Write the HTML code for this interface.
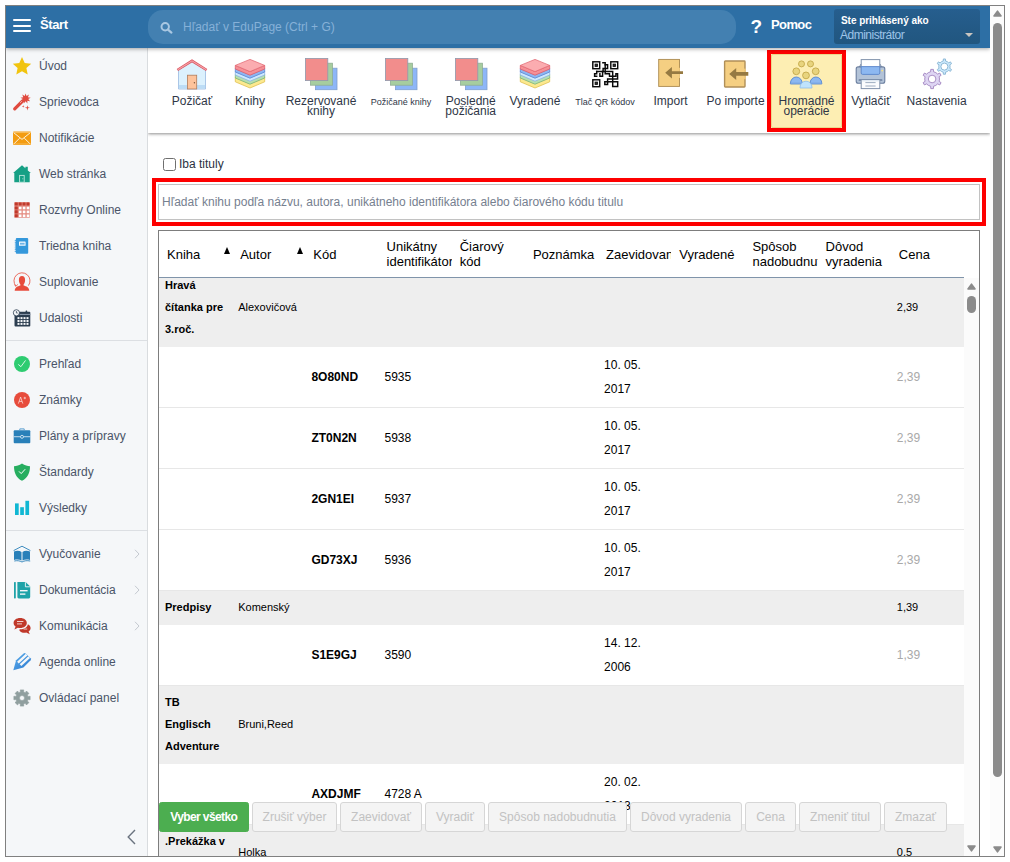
<!DOCTYPE html>
<html lang="sk">
<head>
<meta charset="utf-8">
<title>EduPage</title>
<style>
*{box-sizing:border-box;}
html,body{margin:0;padding:0;}
body{width:1010px;height:862px;overflow:hidden;background:#fff;font-family:"Liberation Sans",sans-serif;font-size:12px;color:#000;position:relative;}
#frame{position:absolute;left:5px;top:5px;width:1000px;height:852px;border:1px solid #808080;overflow:hidden;background:#fff;}
/* coordinates inside frame = page coords - 6 */
#hdr{position:absolute;left:0;top:0;width:984px;height:42px;background:#2d6fa5;box-shadow:0 1px 4px rgba(0,0,0,.35);z-index:5;}
#side{position:absolute;left:0;top:42px;width:142px;height:808px;background:#f5f7f9;border-right:1px solid #d9dcdf;}
#vscroll{position:absolute;left:984px;top:0;width:14px;height:850px;background:#fcfcfc;z-index:9;}
#vscroll .thumb{position:absolute;left:3px;top:17px;width:9px;height:754px;border-radius:5px;background:#8b8b8b;}
.arr-up,.arr-dn{position:absolute;width:9px;height:7px;}
.arr-dn{transform:rotate(180deg);}

#hdr .burger{position:absolute;left:7px;top:13px;width:18px;height:14px;}
#hdr .burger i{position:absolute;left:0;width:18px;height:2px;background:#fff;border-radius:1px;}
#hdr .start{position:absolute;left:34px;top:11px;font-weight:bold;font-size:13px;color:#fff;letter-spacing:-0.4px;line-height:16px;}
#hdr .search{position:absolute;left:142px;top:4px;width:588px;height:34px;border-radius:15px;background:#4380b1;}
#hdr .search svg{position:absolute;left:11.5px;top:11.5px;}
#hdr .search span{position:absolute;left:35px;top:9px;font-size:12px;line-height:16px;color:#86b1d8;letter-spacing:0;}
#hdr .q{position:absolute;left:744.5px;top:9.5px;font-weight:bold;font-size:19px;line-height:22px;color:#fff;}
#hdr .pomoc{position:absolute;left:765px;top:11px;font-weight:bold;font-size:13px;color:#fff;letter-spacing:-0.6px;line-height:16px;}
#hdr .user{position:absolute;left:828px;top:3px;width:146px;height:35px;border-radius:3px;background:linear-gradient(#265e8e,#21567f);}
#hdr .user b{position:absolute;left:7px;top:5.5px;font-size:10px;line-height:12px;color:#fff;letter-spacing:-0.05px;white-space:nowrap;}
#hdr .user span{position:absolute;left:6px;top:19px;font-size:12px;line-height:14px;color:#9ec4e8;letter-spacing:-0.5px;}
#hdr .user i{position:absolute;left:131px;top:24px;width:0;height:0;border-left:4px solid transparent;border-right:4px solid transparent;border-top:4px solid #c9c5c0;}

#side .it{position:absolute;left:0;width:141px;height:36px;}
#side .it svg{position:absolute;left:7px;top:9px;width:18px;height:18px;overflow:visible;}
#side .it span{position:absolute;left:33px;top:10px;font-size:12px;line-height:16px;color:#4a5468;white-space:nowrap;}
#side .it em{position:absolute;left:128px;top:13px;width:6px;height:10px;}
#side .sep{position:absolute;left:0;width:141px;height:1px;background:#dcdfe3;}
#side .coll{position:absolute;left:121px;top:781px;}

#main{position:absolute;left:142px;top:42px;width:842px;height:808px;background:#fff;overflow:hidden;}
/* main coords = page - (148,48) */
#tb{position:absolute;left:0;top:0;width:842px;height:85px;background:#fff;box-shadow:0 1px 3px rgba(0,0,0,.45);z-index:2;}
#tb .ti{position:absolute;top:0;height:85px;width:0;}
#tb .ti svg{position:absolute;overflow:visible;}
#tb .ti .lb{position:absolute;left:-60px;width:120px;text-align:center;top:48px;font-size:12px;line-height:10px;color:#2f3747;white-space:nowrap;}
#tb .ti .lb.sm{font-size:9px;top:49px;}
#tb .hl{position:absolute;left:619px;top:2px;width:79px;height:82px;border:4px solid #fe0000;background:#fdeeb3;}
#tb .hl i{position:absolute;left:0;top:0;width:71px;height:74px;border:1px solid #ecd88c;border-radius:2px;}

/* content; main coords = page - (148,48) */
#cb{position:absolute;left:15px;top:110px;width:13px;height:13px;border:1px solid #6f6f6f;border-radius:2.5px;background:#fff;}
#cbl{position:absolute;left:31px;top:108px;font-size:12px;line-height:16px;color:#2b3242;}
#red{position:absolute;left:4px;top:130px;width:834px;height:48px;border:4px solid #fe0000;}
#inp{position:absolute;left:10px;top:136px;width:822px;height:36px;border:1px solid #c2c2c2;background:#fff;}
#inp span{position:absolute;left:3px;top:9px;font-size:12px;line-height:16px;color:#76808f;white-space:nowrap;}
#tw{position:absolute;left:10px;top:182px;width:822px;height:700px;border:1px solid #7d7d7d;background:#fff;overflow:hidden;}
/* tw inner coords = page - (159,231) */
#th{position:absolute;left:0;top:0;width:805px;height:47px;border-bottom:1px solid #8094aa;background:#fff;z-index:3;}
#th div{position:absolute;top:0;height:46px;width:73.18px;padding-left:8px;font-size:13px;line-height:15px;display:flex;align-items:center;overflow:hidden;white-space:nowrap;color:#000;}
#th i{position:absolute;top:16px;width:0;height:0;border-left:3.8px solid transparent;border-right:3.8px solid transparent;border-bottom:7px solid #000;margin-left:-0.3px;}
#tbod{position:absolute;left:0;top:47px;width:805px;height:660px;}
.gr{position:absolute;left:0;width:805px;background:#eeeeee;font-size:11px;line-height:22px;}
.ir{position:absolute;left:0;width:805px;height:61px;border-bottom:1px solid #e7e7e7;font-size:12px;line-height:24px;background:#fff;}
.gr div,.ir div{position:absolute;top:0;bottom:0;display:flex;align-items:center;white-space:nowrap;}
.gr div{top:-1px;bottom:1px;}
.gr .c0{left:6px;font-weight:bold;}
.c1{left:79.2px;}.c2{left:152.4px;font-weight:bold;}.c3{left:225.5px;}.c6{left:445.1px;}.c10{left:737.8px;}
.ir .c10{color:#a9a9a9;}
#isb{position:absolute;left:805px;top:47px;width:15px;height:660px;background:#fbfbfb;}
#isb .thumb{position:absolute;left:3px;top:18px;width:9px;height:17px;border-radius:4.5px;background:#8b8b8b;}
#btns{position:absolute;left:11px;top:754px;height:30px;white-space:nowrap;z-index:6;}
#btns span{position:absolute;top:0;height:30px;border:1px solid #d6d6d6;border-radius:3px;background:#f4f4f4;color:#c2c2c2;font-size:12px;line-height:28px;text-align:center;}
#btns span.g{background:#4cae50;border-color:#4cae50;color:#fff;font-weight:bold;letter-spacing:-0.6px;}
</style>
</head>
<body>
<div id="frame">
  <div id="hdr">
    <div class="burger"><i style="top:0"></i><i style="top:5.5px"></i><i style="top:11px"></i></div>
    <div class="start">Štart</div>
    <div class="search"><svg width="13" height="12" viewBox="0 0 13 12"><circle cx="5.2" cy="4.8" r="3.7" fill="none" stroke="#a9c7e2" stroke-width="2"/><path d="M8 7.6 L11.4 10.6" stroke="#a9c7e2" stroke-width="2.2" stroke-linecap="round"/></svg><span>Hľadať v EduPage (Ctrl + G)</span></div>
    <div class="q">?</div>
    <div class="pomoc">Pomoc</div>
    <div class="user"><b>Ste prihlásený ako</b><span>Administrátor</span><i></i></div>
  </div>
  <div id="side">
    <div class="it" style="top:0px"><svg viewBox="0 0 18 18"><path d="M9 0 L11.7 6 L18.2 6.7 L13.4 11.1 L14.7 17.5 L9 14.3 L3.3 17.5 L4.6 11.1 L-0.2 6.7 L6.3 6 Z" fill="#f1c40f"/></svg><span>Úvod</span></div>
    <div class="it" style="top:36px"><svg viewBox="0 0 18 18"><path d="M1.7 15.9 L9.6 8" stroke="#e04a3f" stroke-width="3.2" stroke-linecap="round"/><path d="M7.4 9.6 L9.8 7.2" stroke="#f5c8c3" stroke-width="0.8" stroke-linecap="round"/><path d="M12.60 0.40 L13.52 3.06 L15.94 1.62 L14.94 4.25 L17.72 4.70 L15.26 6.07 L17.10 8.20 L14.34 7.67 L14.38 10.49 L12.60 8.30 L10.82 10.49 L10.86 7.67 L8.10 8.20 L9.94 6.07 L7.48 4.70 L10.26 4.25 L9.26 1.62 L11.68 3.06 Z" fill="#e04a3f"/><path d="M14.40 12.20 L14.97 14.23 L17.00 14.80 L14.97 15.37 L14.40 17.40 L13.83 15.37 L11.80 14.80 L13.83 14.23 Z" fill="#e04a3f"/><path d="M10.20 12.10 L10.48 13.12 L11.50 13.40 L10.48 13.68 L10.20 14.70 L9.92 13.68 L8.90 13.40 L9.92 13.12 Z" fill="#e04a3f"/></svg><span>Sprievodca</span></div>
    <div class="it" style="top:72px"><svg viewBox="0 0 18 18"><rect x="0" y="2.5" width="18" height="13.5" rx="0.8" fill="#f39c12"/><path d="M0.6 3.6 L9 10.4 L17.4 3.6" fill="none" stroke="#fdf3df" stroke-width="1"/><path d="M0.6 15.2 L6.6 9.2 M17.4 15.2 L11.4 9.2" fill="none" stroke="#fdf3df" stroke-width="1"/><path d="M0.3 3.5 L17.7 3.5 M0.3 15 L17.7 15" stroke="#f9c877" stroke-width="0.7"/></svg><span>Notifikácie</span></div>
    <div class="it" style="top:108px"><svg viewBox="0 0 18 18"><path d="M9 0.2 L12.4 3.2 L12.4 1.8 L14.8 1.8 L14.8 5.4 L17.9 8.1 L16.7 8.1 L16.7 17.2 L1.3 17.2 L1.3 8.1 L0.1 8.1 Z" fill="#16a085"/><rect x="6.6" y="10.4" width="4.6" height="6.8" fill="none" stroke="#bfe6dd" stroke-width="0.9"/><circle cx="9.8" cy="13.8" r="0.5" fill="#bfe6dd"/></svg><span>Web stránka</span></div>
    <div class="it" style="top:144px"><svg viewBox="0 0 18 18"><rect x="1.3" y="1.1" width="15.5" height="15.7" rx="0.6" fill="#e48c82"/><rect x="1.70" y="1.50" width="3.1" height="3.1" rx="0.5" fill="#c0392b"/><rect x="5.60" y="1.50" width="3.1" height="3.1" rx="0.5" fill="#c0392b"/><rect x="9.50" y="1.50" width="3.1" height="3.1" rx="0.5" fill="#c0392b"/><rect x="13.40" y="1.50" width="3.1" height="3.1" rx="0.5" fill="#c0392b"/><rect x="1.70" y="5.40" width="3.1" height="3.1" rx="0.5" fill="#c0392b"/><rect x="5.90" y="5.70" width="2.6" height="2.6" fill="#fff"/><rect x="9.80" y="5.70" width="2.6" height="2.6" fill="#fff"/><rect x="13.70" y="5.70" width="2.6" height="2.6" fill="#fff"/><rect x="1.70" y="9.30" width="3.1" height="3.1" rx="0.5" fill="#c0392b"/><rect x="5.90" y="9.60" width="2.6" height="2.6" fill="#fff"/><rect x="9.80" y="9.60" width="2.6" height="2.6" fill="#fff"/><rect x="13.70" y="9.60" width="2.6" height="2.6" fill="#fff"/><rect x="1.70" y="13.20" width="3.1" height="3.1" rx="0.5" fill="#c0392b"/><rect x="5.90" y="13.50" width="2.6" height="2.6" fill="#fff"/><rect x="9.80" y="13.50" width="2.6" height="2.6" fill="#fff"/><rect x="13.70" y="13.50" width="2.6" height="2.6" fill="#fff"/></svg><span>Rozvrhy Online</span></div>
    <div class="it" style="top:180px"><svg viewBox="0 0 18 18"><rect x="2.8" y="0.9" width="12.4" height="15.8" rx="1" fill="#3498db"/><rect x="6" y="4.6" width="6.6" height="4.2" rx="0.4" fill="#f2f8fd"/><rect x="7" y="5.8" width="4.6" height="1.8" fill="#6db3e6"/><g fill="#3498db"><rect x="1.7" y="3.2" width="1.6" height="1.1" rx="0.4"/><rect x="1.7" y="5.3" width="1.6" height="1.1" rx="0.4"/><rect x="1.7" y="7.4" width="1.6" height="1.1" rx="0.4"/><rect x="1.7" y="9.5" width="1.6" height="1.1" rx="0.4"/><rect x="1.7" y="11.6" width="1.6" height="1.1" rx="0.4"/><rect x="1.7" y="13.7" width="1.6" height="1.1" rx="0.4"/></g></svg><span>Triedna kniha</span></div>
    <div class="it" style="top:216px"><svg viewBox="0 0 18 18"><path d="M2.9 13 A8 8 0 1 1 15.4 12.6" fill="none" stroke="#e74c3c" stroke-width="0.8"/><path d="M1.2 11.6 L3 13.4 L4.6 11.4" fill="none" stroke="#e74c3c" stroke-width="0.8"/><path d="M9 3 C11 3 12.1 4.6 12.1 7 C12.1 9 11.3 10.6 10.6 11.4 L10.6 12.6 C13.4 13.4 16 14.2 16.3 17.8 L1.7 17.8 C2 14.2 4.6 13.4 7.4 12.6 L7.4 11.4 C6.7 10.6 5.9 9 5.9 7 C5.9 4.6 7 3 9 3 Z" fill="#e74c3c"/></svg><span>Suplovanie</span></div>
    <div class="it" style="top:252px"><svg viewBox="0 0 18 18"><rect x="1.5" y="2.8" width="15.8" height="14.6" rx="1" fill="#2c3e50"/><rect x="12.6" y="1.4" width="1.6" height="2.6" rx="0.5" fill="#2c3e50"/><rect x="6.4" y="4.9" width="10.9" height="1.1" fill="#8796a8"/><rect x="4.5" y="8.1" width="2" height="2" fill="#f5f7f9"/><rect x="7.5" y="8.1" width="2" height="2" fill="#f5f7f9"/><rect x="10.5" y="8.1" width="2" height="2" fill="#f5f7f9"/><rect x="13.5" y="8.1" width="2" height="2" fill="#f5f7f9"/><rect x="4.5" y="11.0" width="2" height="2" fill="#f5f7f9"/><rect x="7.5" y="11.0" width="2" height="2" fill="#f5f7f9"/><rect x="10.5" y="11.0" width="2" height="2" fill="#f5f7f9"/><rect x="13.5" y="11.0" width="2" height="2" fill="#f5f7f9"/><rect x="4.5" y="13.9" width="2" height="2" fill="#f5f7f9"/><rect x="7.5" y="13.9" width="2" height="2" fill="#f5f7f9"/><rect x="10.5" y="13.9" width="2" height="2" fill="#f5f7f9"/><rect x="13.5" y="13.9" width="2" height="2" fill="#f5f7f9"/><circle cx="3.4" cy="3.8" r="3.1" fill="#f5f7f9" stroke="#2c3e50" stroke-width="0.8"/><path d="M3.4 2 L3.4 4 L4.8 4" fill="none" stroke="#2c3e50" stroke-width="0.7"/></svg><span>Udalosti</span></div>
    <div class="it" style="top:298px"><svg viewBox="0 0 18 18"><circle cx="9" cy="9" r="8" fill="#2ecc71"/><path d="M5.3 9.4 L7.9 11.7 L12.5 5.4" fill="none" stroke="#e9faf0" stroke-width="0.9"/></svg><span>Prehľad</span></div>
    <div class="it" style="top:334px"><svg viewBox="0 0 18 18"><circle cx="9" cy="9" r="8" fill="#e74c3c"/><path d="M5.4 12.6 L7.6 6 L9.8 12.6 M6.2 10.4 L9 10.4" fill="none" stroke="#fbe3e0" stroke-width="0.75"/><path d="M10.6 7 L13 7 M11.8 5.8 L11.8 8.2" stroke="#fbe3e0" stroke-width="0.7"/></svg><span>Známky</span></div>
    <div class="it" style="top:370px"><svg viewBox="0 0 18 18"><rect x="0.7" y="3.2" width="16.6" height="13" rx="1" fill="#2980b9"/><path d="M6.8 3.2 L6.8 1.9 L11.2 1.9 L11.2 3.2" fill="none" stroke="#5a9fd0" stroke-width="1"/><rect x="0.7" y="9.3" width="16.6" height="0.9" fill="#d4e6f3"/><circle cx="9" cy="9.8" r="1.5" fill="#2980b9" stroke="#d4e6f3" stroke-width="0.9"/></svg><span>Plány a prípravy</span></div>
    <div class="it" style="top:406px"><svg viewBox="0 0 18 18"><path d="M9 0.6 C11.8 2.6 14.6 3.2 17 3.2 C17 10 14.6 14.8 9 17.8 C3.4 14.8 1 10 1 3.2 C3.4 3.2 6.2 2.6 9 0.6 Z" fill="#27ae60"/><path d="M6 8.4 L8.2 10.6 L12.2 6.2" fill="none" stroke="#fff" stroke-width="1"/></svg><span>Štandardy</span></div>
    <div class="it" style="top:442px"><svg viewBox="0 0 18 18"><rect x="2" y="4.4" width="3.7" height="11.6" fill="#10b7d3"/><rect x="7.2" y="8.2" width="3.7" height="7.8" fill="#10b7d3"/><rect x="12.4" y="1.8" width="3.7" height="14.2" fill="#10b7d3"/></svg><span>Výsledky</span></div>
    <div class="it" style="top:488px"><svg viewBox="0 0 18 18"><path d="M0.6 5.6 L9 1.2 L17.4 5.6" fill="none" stroke="#2980b9" stroke-width="0.9"/><path d="M1 6.4 C4 5.4 6.6 5.6 8.5 7 L8.5 15.6 C6.6 14.4 4 14.2 1 15 Z" fill="#2980b9"/><path d="M17 6.4 C14 5.4 11.4 5.6 9.5 7 L9.5 15.6 C11.4 14.4 14 14.2 17 15 Z" fill="#2980b9"/><path d="M1.3 16 C4 15.4 6.6 15.6 9 17 C11.4 15.6 14 15.4 17.2 16" fill="none" stroke="#2980b9" stroke-width="0.9"/></svg><span>Vyučovanie</span><em><svg viewBox="0 0 6 10" style="position:absolute;left:0;top:0;width:6px;height:10px"><path d="M1 0.8 L5 5 L1 9.2" fill="none" stroke="#c5cad1" stroke-width="1"/></svg></em></div>
    <div class="it" style="top:524px"><svg viewBox="0 0 18 18"><rect x="1" y="1" width="1.8" height="16.4" rx="0.6" fill="#1fa3a8"/><path d="M4.4 1 L12.6 1 L17.2 5.6 L17.2 16 Q17.2 17.4 15.8 17.4 L5.8 17.4 Q4.4 17.4 4.4 16 Z" fill="#1fa3a8"/><path d="M12.4 1.2 L12.4 5.8 L17 5.8" fill="none" stroke="#f5f7f9" stroke-width="0.9"/><rect x="7" y="9" width="7.6" height="1.4" fill="#f5f7f9"/><rect x="7" y="12.4" width="5.4" height="1.4" fill="#f5f7f9"/></svg><span>Dokumentácia</span><em><svg viewBox="0 0 6 10" style="position:absolute;left:0;top:0;width:6px;height:10px"><path d="M1 0.8 L5 5 L1 9.2" fill="none" stroke="#c5cad1" stroke-width="1"/></svg></em></div>
    <div class="it" style="top:560px"><svg viewBox="0 0 18 18"><path d="M7.2 1 C11.2 1 13.8 3.2 13.8 6 C13.8 8.8 11.2 11 7.2 11 C6.4 11 5.6 10.9 4.9 10.7 L1.4 12.4 L2.6 9.6 C1.2 8.7 0.6 7.4 0.6 6 C0.6 3.2 3.2 1 7.2 1 Z" fill="#c0392b"/><path d="M14.9 7.2 C16.6 8 17.6 9.4 17.6 11 C17.6 12.4 16.9 13.6 15.6 14.4 L16.8 17.2 L13.2 15.5 C12.6 15.6 12 15.7 11.4 15.7 C9.2 15.7 7.4 14.8 6.4 13.4 L6.6 12.2 C10.8 12.4 14.4 10.4 14.9 7.2 Z" fill="#c0392b"/><rect x="4" y="4" width="6.4" height="1" fill="#f1d1cd"/><rect x="4" y="6.4" width="5" height="1" fill="#f1d1cd"/><rect x="10.6" y="11.6" width="3.6" height="0.9" fill="#f1d1cd"/></svg><span>Komunikácia</span><em><svg viewBox="0 0 6 10" style="position:absolute;left:0;top:0;width:6px;height:10px"><path d="M1 0.8 L5 5 L1 9.2" fill="none" stroke="#c5cad1" stroke-width="1"/></svg></em></div>
    <div class="it" style="top:596px"><svg viewBox="0 0 18 18"><defs><linearGradient id="pg" x1="0" y1="0" x2="1" y2="1"><stop offset="0" stop-color="#5fb0ec"/><stop offset="1" stop-color="#2877cf"/></linearGradient></defs><path d="M0.3 17.2 L3.1 7.2 L10.6 0.5 Q11.6 -0.3 12.6 0.6 L17.6 5.2 Q18.5 6.2 17.6 7.2 L10.4 14.5 Z" fill="url(#pg)"/><path d="M4.9 9.6 L13.6 1.6 M7.5 12.2 L16.2 4.2" stroke="#f5f7f9" stroke-width="2.4"/></svg><span>Agenda online</span></div>
    <div class="it" style="top:632px"><svg viewBox="0 0 18 18"><path fill-rule="evenodd" d="M7.25 0.89 L10.75 0.89 L10.59 3.01 L12.11 3.64 L13.50 2.03 L15.97 4.50 L14.36 5.89 L14.99 7.41 L17.11 7.25 L17.11 10.75 L14.99 10.59 L14.36 12.11 L15.97 13.50 L13.50 15.97 L12.11 14.36 L10.59 14.99 L10.75 17.11 L7.25 17.11 L7.41 14.99 L5.89 14.36 L4.50 15.97 L2.03 13.50 L3.64 12.11 L3.01 10.59 L0.89 10.75 L0.89 7.25 L3.01 7.41 L3.64 5.89 L2.03 4.50 L4.50 2.03 L5.89 3.64 L7.41 3.01 Z M9 6.5 A2.5 2.5 0 1 0 9 11.5 A2.5 2.5 0 1 0 9 6.5 Z" fill="#909f9f" stroke="#909f9f" stroke-width="0.6" stroke-linejoin="round"/></svg><span>Ovládací panel</span></div>
    <div class="sep" style="top:292px"></div><div class="sep" style="top:482px"></div>
    <svg class="coll" width="9" height="16" viewBox="0 0 9 16"><path d="M8 1 L1.2 8 L8 15" fill="none" stroke="#6b7480" stroke-width="1.4"/></svg>
  </div>
  <div id="main">
  <div id="tb">
    <div class="hl"><i></i></div>
    <div class="ti" style="left:44.0px"><svg style="left:-16px;top:10px" width="32" height="32" viewBox="0 0 32 32"><path d="M2.5 12 L16 3.5 L29.5 12 L29.5 31 L2.5 31 Z" fill="#dcf1fd" stroke="#a3bfe4" stroke-width="0.9"/><rect x="2.9" y="27" width="26.2" height="3.6" fill="#bcdcf5"/><path d="M1.4 12 L16 2.8 L30.6 12" fill="none" stroke="#dc5863" stroke-width="2.6" stroke-linejoin="miter"/><path d="M1.8 11.7 L16 2.8 L30.2 11.7" fill="none" stroke="#f6a3a8" stroke-width="1.1"/><rect x="11.5" y="17.2" width="9.2" height="13.8" fill="#fdc39b" stroke="#b07c5a" stroke-width="0.8"/><circle cx="18.4" cy="24.8" r="0.7" fill="#7a5238"/></svg><div class="lb">Požičať</div></div>
    <div class="ti" style="left:102.0px"><svg style="left:-16px;top:10px" width="32" height="32" viewBox="0 0 32 32"><path d="M1.3 19.6 L16 25.8 L30.7 19.6 L30.7 23.8 L16 30.0 L1.3 23.8 Z" fill="#fce98f" stroke="#dfbf4e" stroke-width="0.8" stroke-linejoin="round"/><path d="M1.3 16.6 L16 22.8 L30.7 16.6 L30.7 20.0 L16 26.2 L1.3 20.0 Z" fill="#b5dfb0" stroke="#7db57b" stroke-width="0.8" stroke-linejoin="round"/><path d="M1.3 13.6 L16 19.8 L30.7 13.6 L30.7 17.0 L16 23.2 L1.3 17.0 Z" fill="#cfe9fd" stroke="#8fb6e6" stroke-width="0.8" stroke-linejoin="round"/><path d="M1.3 10.6 L16 16.8 L30.7 10.6 L30.7 14.0 L16 20.2 L1.3 14.0 Z" fill="#8db7f3" stroke="#5c88d4" stroke-width="0.8" stroke-linejoin="round"/><path d="M1.3 7.4 L16 13.6 L30.7 7.4 L30.7 11 L16 17.2 L1.3 11 Z" fill="#f58f96" stroke="#df5f6b" stroke-width="0.8" stroke-linejoin="round"/><path d="M1.3 7.4 L16 1.4 L30.7 7.4 L16 13.6 Z" fill="#fbacb0" stroke="#e36c76" stroke-width="0.8" stroke-linejoin="round"/></svg><div class="lb">Knihy</div></div>
    <div class="ti" style="left:173.0px"><svg style="left:-16px;top:10px" width="32" height="32" viewBox="0 0 32 32"><rect x="10.5" y="10.2" width="21.5" height="21.5" fill="#8db6f7" stroke="#7f9fce" stroke-width="0.8"/><rect x="5.4" y="5.2" width="22" height="22" fill="#a6cd9f" stroke="#8fae93" stroke-width="0.8"/><rect x="0.4" y="0.4" width="22.4" height="22.2" fill="#f28d8c" stroke="#8e9aad" stroke-width="0.8"/></svg><div class="lb">Rezervované<br>knihy</div></div>
    <div class="ti" style="left:253.0px"><svg style="left:-16px;top:10px" width="32" height="32" viewBox="0 0 32 32"><rect x="10.5" y="10.2" width="21.5" height="21.5" fill="#8db6f7" stroke="#7f9fce" stroke-width="0.8"/><rect x="5.4" y="5.2" width="22" height="22" fill="#a6cd9f" stroke="#8fae93" stroke-width="0.8"/><rect x="0.4" y="0.4" width="22.4" height="22.2" fill="#f28d8c" stroke="#8e9aad" stroke-width="0.8"/></svg><div class="lb sm">Požičané knihy</div></div>
    <div class="ti" style="left:322.7px"><svg style="left:-16px;top:10px" width="32" height="32" viewBox="0 0 32 32"><rect x="10.5" y="10.2" width="21.5" height="21.5" fill="#8db6f7" stroke="#7f9fce" stroke-width="0.8"/><rect x="5.4" y="5.2" width="22" height="22" fill="#a6cd9f" stroke="#8fae93" stroke-width="0.8"/><rect x="0.4" y="0.4" width="22.4" height="22.2" fill="#f28d8c" stroke="#8e9aad" stroke-width="0.8"/></svg><div class="lb">Posledné<br>požičania</div></div>
    <div class="ti" style="left:387.0px"><svg style="left:-16px;top:10px" width="32" height="32" viewBox="0 0 32 32"><path d="M1.3 19.6 L16 25.8 L30.7 19.6 L30.7 23.8 L16 30.0 L1.3 23.8 Z" fill="#fce98f" stroke="#dfbf4e" stroke-width="0.8" stroke-linejoin="round"/><path d="M1.3 16.6 L16 22.8 L30.7 16.6 L30.7 20.0 L16 26.2 L1.3 20.0 Z" fill="#b5dfb0" stroke="#7db57b" stroke-width="0.8" stroke-linejoin="round"/><path d="M1.3 13.6 L16 19.8 L30.7 13.6 L30.7 17.0 L16 23.2 L1.3 17.0 Z" fill="#cfe9fd" stroke="#8fb6e6" stroke-width="0.8" stroke-linejoin="round"/><path d="M1.3 10.6 L16 16.8 L30.7 10.6 L30.7 14.0 L16 20.2 L1.3 14.0 Z" fill="#8db7f3" stroke="#5c88d4" stroke-width="0.8" stroke-linejoin="round"/><path d="M1.3 7.4 L16 13.6 L30.7 7.4 L30.7 11 L16 17.2 L1.3 11 Z" fill="#f58f96" stroke="#df5f6b" stroke-width="0.8" stroke-linejoin="round"/><path d="M1.3 7.4 L16 1.4 L30.7 7.4 L16 13.6 Z" fill="#fbacb0" stroke="#e36c76" stroke-width="0.8" stroke-linejoin="round"/></svg><div class="lb">Vyradené</div></div>
    <div class="ti" style="left:457.0px"><svg style="left:-13.3px;top:12.7px" width="26.6" height="26.6" viewBox="0 0 26.6 26.6" fill="none" stroke="#0a0a0a" stroke-width="1.45" stroke-linejoin="miter" stroke-linecap="square"><rect x="0.8" y="0.8" width="6.9" height="6.9"/><rect x="18.8" y="0.8" width="6.9" height="6.9"/><rect x="0.8" y="18.8" width="6.9" height="6.9"/><g fill="#333" stroke-width="0.9"><rect x="3.1" y="3.1" width="2.3" height="2.3"/><rect x="21.1" y="3.1" width="2.3" height="2.3"/><rect x="3.1" y="21.1" width="2.3" height="2.3"/></g><path d="M10.9 1.8 L13.2 1.8 L13.2 3.8 L15.6 3.8 L15.6 7.5 L11.1 7.5 L11.1 10.6"/><path d="M13.2 3.8 L13.2 12.8 L17.5 12.8 L17.5 15.2 L23.9 15.2 L23.9 12.8 L25.6 12.8 L25.6 18.1 L15.6 18.1 L15.6 20.7"/><path d="M4.7 10.6 L20.7 10.6 L20.7 25.4"/><path d="M4.7 10.6 L4.7 12.8 L2.6 12.8 L2.6 15.3 L4.7 15.3"/><path d="M7.9 12.8 L7.9 15.3 L10.6 15.3 L10.6 10.6"/><path d="M12.8 20.7 L25.7 20.7 L25.7 25.6 L20.7 25.6 M12.8 20.7 L12.8 23.5 L15.6 23.5 L15.6 20.7"/></svg><div class="lb sm">Tlač QR kódov</div></div>
    <div class="ti" style="left:522.5px"><svg style="left:-13.6px;top:10px" width="28" height="30" viewBox="0 0 28 30"><rect x="1.7" y="1.4" width="20.8" height="27" fill="#f5cf82" stroke="#ab8a50" stroke-width="0.9"/><rect x="21.8" y="9.8" width="1.05" height="10.2" fill="#f5cf82"/><path d="M8.2 14.7 L14.9 9 L14.9 13.2 L26 13.2 L26 16.1 L14.9 16.1 L14.9 20.5 Z" fill="#967a42"/></svg><div class="lb">Import</div></div>
    <div class="ti" style="left:587.6px"><svg style="left:-12.5px;top:12px" width="28" height="30" viewBox="0 0 28 30"><rect x="1.6" y="1" width="20.4" height="26" rx="0.7" fill="#f5cf82" stroke="#b08f58" stroke-width="1.4"/><rect x="21.2" y="8.6" width="1.5" height="10.6" fill="#f5cf82"/><path d="M6.2 14 L13.2 7.9 L13.2 12.1 L25.3 12.1 L25.3 15.8 L13.2 15.8 L13.2 20.1 Z" fill="#967a42"/></svg><div class="lb">Po importe</div></div>
    <div class="ti" style="left:658.5px"><svg style="left:-16.5px;top:12px" width="33" height="29" viewBox="0 0 33 29"><path d="M0.4 24 L0.4 23.4 A5.9 6.4 0 0 1 12.2 23.4 L12.2 24 Z" fill="#8cb8f1" stroke="#4a7fd0" stroke-width="0.8" stroke-linejoin="round"/><path d="M20 24 L20 23.4 A5.9 6.4 0 0 1 31.8 23.4 L31.8 24 Z" fill="#8cb8f1" stroke="#4a7fd0" stroke-width="0.8" stroke-linejoin="round"/><rect x="0.8" y="22.6" width="11" height="1.2" fill="#7ba6e2"/><rect x="20.4" y="22.6" width="11" height="1.2" fill="#7ba6e2"/><path d="M10 28 L10 27.4 A6 6.2 0 0 1 22 27.4 L22 28 Z" fill="#bfe3fc" stroke="#8dbdea" stroke-width="0.8" stroke-linejoin="round"/><g fill="#e8d47e" stroke="#c4a84a" stroke-width="0.9"><circle cx="11.5" cy="3.9" r="3"/><circle cx="20.5" cy="3.9" r="3"/><circle cx="6.3" cy="11.3" r="3.4"/><circle cx="25.7" cy="11.3" r="3.4"/><circle cx="16" cy="15.4" r="3.4"/></g></svg><div class="lb">Hromadné<br>operácie</div></div>
    <div class="ti" style="left:723.0px"><svg style="left:-16px;top:10px" width="31" height="32" viewBox="0 0 31 32"><path d="M4.4 9 L6 6 L25 6 L26.6 9 Z" fill="#c3cfdf" stroke="#7689a6" stroke-width="0.9"/><rect x="1.2" y="8.9" width="28.6" height="16.4" rx="2" fill="#b3c3d8" stroke="#6a7e9e" stroke-width="1.1"/><rect x="6.2" y="1.6" width="18.6" height="8" fill="#fff" stroke="#8293ac" stroke-width="1"/><path d="M6.2 8.6 L24.8 8.6 L24.8 15 Q24.8 16.4 23.4 16.4 L7.6 16.4 Q6.2 16.4 6.2 15 Z" fill="#8db8f1" stroke="#5a84c8" stroke-width="0.9"/><circle cx="27.2" cy="12.6" r="0.9" fill="#f7e27a"/><path d="M4.4 22 L26.6 22" stroke="#6a7e9e" stroke-width="1.7" stroke-linecap="round"/><rect x="6.2" y="22" width="18.6" height="8.6" fill="#fbfcfe" stroke="#8293ac" stroke-width="1"/><rect x="6.8" y="22" width="17.4" height="1.4" fill="#dfe8f2"/><path d="M10.4 24.6 L20.6 24.6 M10.4 28 L20.6 28" stroke="#93a4ba" stroke-width="0.9"/></svg><div class="lb">Vytlačiť</div></div>
    <div class="ti" style="left:788.6px"><svg style="left:-16px;top:10px" width="34" height="32" viewBox="0 0 34 32"><path d="M9.64 13.75 L9.78 11.39 L12.42 11.39 L12.56 13.75 A7.40 7.40 0 0 1 16.65 16.11 L18.76 15.05 L20.08 17.33 L18.11 18.64 A7.40 7.40 0 0 1 18.11 23.36 L20.08 24.67 L18.76 26.95 L16.65 25.89 A7.40 7.40 0 0 1 12.56 28.25 L12.42 30.61 L9.78 30.61 L9.64 28.25 A7.40 7.40 0 0 1 5.55 25.89 L3.44 26.95 L2.12 24.67 L4.09 23.36 A7.40 7.40 0 0 1 4.09 18.64 L2.12 17.33 L3.44 15.05 L5.55 16.11 A7.40 7.40 0 0 1 9.64 13.75 Z M7.30 21.00 A3.80 3.80 0 1 0 14.90 21.00 A3.80 3.80 0 1 0 7.30 21.00 Z" fill="#ded5f3" stroke="#a184bf" stroke-width="0.9" fill-rule="evenodd" stroke-linejoin="round"/><path d="M22.27 3.01 L22.35 0.97 L24.45 0.97 L24.53 3.01 A5.70 5.70 0 0 1 27.68 4.83 L29.48 3.88 L30.53 5.69 L28.80 6.78 A5.70 5.70 0 0 1 28.80 10.42 L30.53 11.51 L29.48 13.32 L27.68 12.37 A5.70 5.70 0 0 1 24.53 14.19 L24.45 16.23 L22.35 16.23 L22.27 14.19 A5.70 5.70 0 0 1 19.12 12.37 L17.32 13.32 L16.27 11.51 L18.00 10.42 A5.70 5.70 0 0 1 18.00 6.78 L16.27 5.69 L17.32 3.88 L19.12 4.83 A5.70 5.70 0 0 1 22.27 3.01 Z M19.90 8.60 A3.50 3.50 0 1 0 26.90 8.60 A3.50 3.50 0 1 0 19.90 8.60 Z" fill="#cbe8fb" stroke="#86b3d3" stroke-width="0.9" fill-rule="evenodd" stroke-linejoin="round"/></svg><div class="lb">Nastavenia</div></div>
  </div>
  <div id="cb"></div><div id="cbl">Iba tituly</div>
  <div id="red"></div>
  <div id="inp"><span>Hľadať knihu podľa názvu, autora, unikátneho identifikátora alebo čiarového kódu titulu</span></div>
  <div id="tw">
    <div id="th"><div style="left:0.00px"><span>Kniha</span></div><div style="left:73.18px"><span>Autor</span></div><div style="left:146.36px"><span>Kód</span></div><div style="left:219.54px"><span>Unikátny<br>identifikátor</span></div><div style="left:292.72px"><span>Čiarový<br>kód</span></div><div style="left:365.90px"><span>Poznámka</span></div><div style="left:439.08px"><span>Zaevidované</span></div><div style="left:512.26px"><span>Vyradené</span></div><div style="left:585.44px"><span>Spôsob<br>nadobudnutia</span></div><div style="left:658.62px"><span>Dôvod<br>vyradenia</span></div><div style="left:731.80px"><span>Cena</span></div><i style="left:65px"></i><i style="left:138.2px"></i></div>
    <div id="tbod">
<div class="gr" style="top:-9px;height:78px"><div class="c0">Hravá<br>čítanka pre<br>3.roč.</div><div class="c1">Alexovičová</div><div class="c10">2,39</div></div>
<div class="ir" style="top:69px"><div class="c2">8O80ND</div><div class="c3">5935</div><div class="c6">10. 05.<br>2017</div><div class="c10">2,39</div></div>
<div class="ir" style="top:130px"><div class="c2">ZT0N2N</div><div class="c3">5938</div><div class="c6">10. 05.<br>2017</div><div class="c10">2,39</div></div>
<div class="ir" style="top:191px"><div class="c2">2GN1EI</div><div class="c3">5937</div><div class="c6">10. 05.<br>2017</div><div class="c10">2,39</div></div>
<div class="ir" style="top:252px"><div class="c2">GD73XJ</div><div class="c3">5936</div><div class="c6">10. 05.<br>2017</div><div class="c10">2,39</div></div>
<div class="gr" style="top:313px;height:34px"><div class="c0">Predpisy</div><div class="c1">Komenský</div><div class="c10">1,39</div></div>
<div class="ir" style="top:347px"><div class="c2">S1E9GJ</div><div class="c3">3590</div><div class="c6">14. 12.<br>2006</div><div class="c10">1,39</div></div>
<div class="gr" style="top:408px;height:78px"><div class="c0">TB<br>Englisch<br>Adventure</div><div class="c1">Bruni,Reed</div><div class="c10"></div></div>
<div class="ir" style="top:486px"><div class="c2">AXDJMF</div><div class="c3">4728 A</div><div class="c6">20. 02.<br>2013</div><div class="c10"></div></div>
<div class="gr" style="top:547px;height:56px"><div class="c0">.Prekážka v<br>&nbsp;</div><div class="c1">Holka</div><div class="c10">0,5</div></div>
    </div>
    <div id="isb"><div class="arr-up" style="left:3px;top:5px"><svg width="9" height="7" viewBox="0 0 9 7" style="display:block"><path d="M4.5 1.2 L8 5.9 L1 5.9 Z" fill="#8b8b8b" stroke="#8b8b8b" stroke-width="1.6" stroke-linejoin="round"/></svg></div><div class="thumb"></div><div class="arr-dn" style="left:3px;top:567px"><svg width="9" height="7" viewBox="0 0 9 7" style="display:block"><path d="M4.5 1.2 L8 5.9 L1 5.9 Z" fill="#8b8b8b" stroke="#8b8b8b" stroke-width="1.6" stroke-linejoin="round"/></svg></div></div>
  </div>
  <div id="btns"><span class="g" style="left:-0.5px;width:90.5px;border-radius:2.5px">Vyber všetko</span><span class="" style="left:93px;width:85px">Zrušiť výber</span><span class="" style="left:181px;width:82px">Zaevidovať</span><span class="" style="left:266px;width:60px">Vyradiť</span><span class="" style="left:329px;width:139px">Spôsob nadobudnutia</span><span class="" style="left:471px;width:112px">Dôvod vyradenia</span><span class="" style="left:586px;width:51px">Cena</span><span class="" style="left:640px;width:82px">Zmeniť titul</span><span class="" style="left:725px;width:63px">Zmazať</span></div>
  </div>
  <div id="vscroll"><div class="arr-up" style="left:3px;top:4px"><svg width="9" height="7" viewBox="0 0 9 7" style="display:block"><path d="M4.5 1.2 L8 5.9 L1 5.9 Z" fill="#8b8b8b" stroke="#8b8b8b" stroke-width="1.6" stroke-linejoin="round"/></svg></div><div class="thumb"></div><div class="arr-dn" style="left:3px;top:840px"><svg width="9" height="7" viewBox="0 0 9 7" style="display:block"><path d="M4.5 1.2 L8 5.9 L1 5.9 Z" fill="#8b8b8b" stroke="#8b8b8b" stroke-width="1.6" stroke-linejoin="round"/></svg></div></div>
</div>
</body>
</html>
